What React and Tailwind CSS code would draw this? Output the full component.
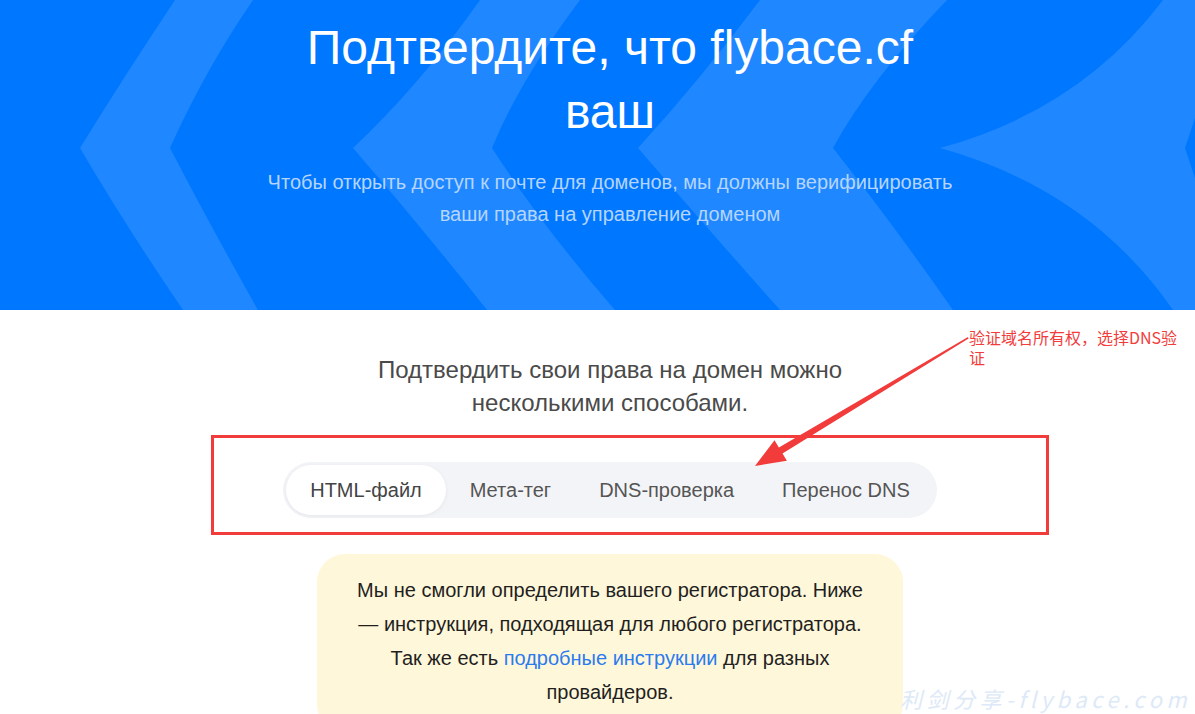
const Chevrons = () => (
  <svg
    className="absolute inset-0 h-full w-full"
    viewBox="0 0 1195 310"
    preserveAspectRatio="none"
  >
    <g fill="#ffffff" fillOpacity="0.12">
      <path d="M175,0 L253,0 Q205,70 170,148 Q210,225 258,310 L183,310 Q125,225 80,148 Q125,75 175,0 Z" />
      <path d="M480,0 L580,0 Q520,80 492,148 Q545,230 615,310 L487,310 Q420,225 353,148 Q420,85 480,0 Z" />
      <path d="M760,0 L947,0 Q870,80 833,148 Q890,220 953,310 L780,310 Q700,220 638,148 Q700,80 760,0 Z" />
      <path d="M1163,0 L1195,0 L1195,118 L1185,148 L1195,178 L1195,310 L1173,310 Q1090,190 940,148 Q1080,110 1163,0 Z" />
    </g>
  </svg>
);

const Arrow = () => (
  <svg className="absolute left-0 top-0 pointer-events-none" width="1195" height="714">
    <polygon
      fill="#f23c3c"
      points="968,337 968.6,338.4 782.5,453.5 786.9,460.8 755,466 774.5,440.2 778.9,447.5"
    />
  </svg>
);

const tabs = ['HTML-файл', 'Мета-тег', 'DNS-проверка', 'Перенос DNS'];

export default function App() {
  return (
    <div className="relative min-h-[714px] overflow-hidden bg-white font-['Liberation_Sans',Arial,sans-serif]">
      <header className="relative h-[310px] overflow-hidden bg-[#0077ff]">
        <Chevrons />
        <div className="relative flex flex-col items-center pl-[25px] pt-4 text-center">
          <h1 className="max-w-[640px] text-[48px] leading-[64px] font-normal text-white">
            Подтвердите, что flybace.cf ваш
          </h1>
          <p className="mt-[22px] max-w-[710px] text-[20px] leading-[32px] text-[#b5d5ff]">
            Чтобы открыть доступ к почте для доменов, мы должны верифицировать ваши права на управление доменом
          </p>
        </div>
      </header>

      <section className="flex flex-col items-center pl-[25px] pt-[43px]">
        <p className="max-w-[500px] text-center text-[24px] leading-[33px] text-[#4a4a4a]">
          Подтвердить свои права на домен можно несколькими способами.
        </p>

        <div className="mt-[43px] flex items-center rounded-full bg-[#f3f4f7] p-[3px]">
          {tabs.map((t, i) => (
            <button
              key={t}
              className={
                i === 0
                  ? 'h-[50px] rounded-full bg-white px-6 text-[20px] text-[#444] shadow-[0_1px_4px_rgba(0,0,0,0.06)]'
                  : 'h-[50px] rounded-full px-6 text-[20px] text-[#555]'
              }
            >
              {t}
            </button>
          ))}
        </div>

        <div className="mt-9 w-[586px] rounded-[28px] bg-[#fff7d9] px-9 pt-[19px] pb-6 text-center text-[20px] leading-[34px] text-[#1f1f1f]">
          Мы не смогли определить вашего регистратора. Ниже — инструкция, подходящая для любого регистратора. Так же есть{' '}
          <a href="#" className="text-[#2b7bef]">
            подробные инструкции
          </a>{' '}
          для разных провайдеров.
        </div>
      </section>

      {/* annotation overlay */}
      <div className="absolute left-[211px] top-[435px] h-[100px] w-[838px] border-[3px] border-[#f23c3c]" />
      <p className="absolute left-[969px] top-[327px] w-[216px] font-['Noto_Sans_CJK_SC',sans-serif] text-[16px] leading-[20px] text-[#f23c3c]">
        验证域名所有权，选择DNS验证
      </p>
      <Arrow />

      <div className="absolute left-[900px] top-[684px] font-['Noto_Sans_CJK_SC',sans-serif] text-[22px] italic leading-[28px] tracking-[4.5px] text-[#dde9f7]">
        利剑分享-flybace.com
      </div>
    </div>
  );
}
